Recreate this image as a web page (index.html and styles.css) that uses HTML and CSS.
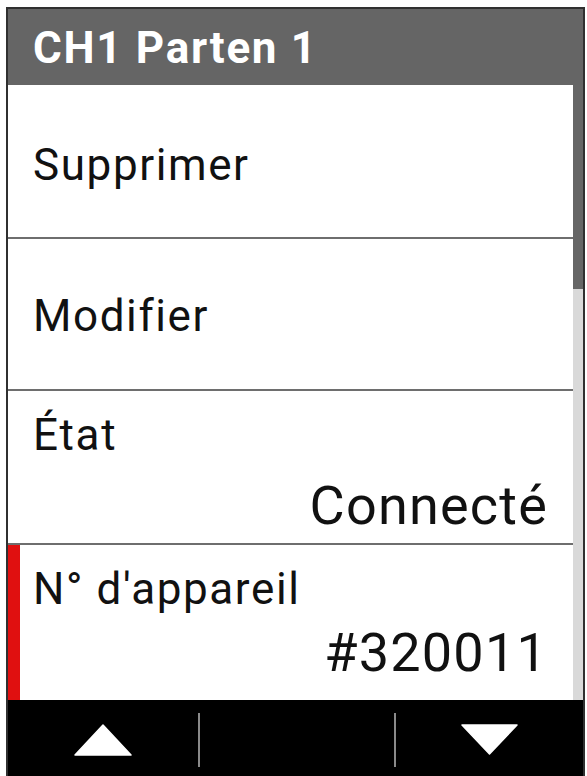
FILE: index.html
```html
<!DOCTYPE html>
<html lang="fr">
<head>
<meta charset="utf-8">
<title>CH1 Parten 1</title>
<link rel="stylesheet" href="styles.css">
</head>
<body>
<div class="device">
  <header class="title-bar"><span class="title">CH1 Parten 1</span></header>
  <div class="content">
    <ul class="menu">
      <li class="row row-single"><span class="label">Supprimer</span></li>
      <li class="row row-single"><span class="label">Modifier</span></li>
      <li class="row row-double row-state">
        <span class="label">État</span>
        <span class="value">Connecté</span>
      </li>
      <li class="row row-double row-device is-selected">
        <span class="label">N° d'appareil</span>
        <span class="value">#320011</span>
      </li>
    </ul>
    <div class="scrollbar"><div class="thumb"></div></div>
  </div>
  <footer class="softkeys">
    <div class="key">
      <svg class="arrow" width="58" height="32" viewBox="0 0 58 32"><polygon points="29,1 57,31 1,31" fill="#fff" stroke="#fff" stroke-width="1.5" stroke-linejoin="round"/></svg>
    </div>
    <span class="sep"></span>
    <div class="key"></div>
    <span class="sep"></span>
    <div class="key">
      <svg class="arrow" width="57" height="31" viewBox="0 0 57 31"><polygon points="1,1 56,1 28.5,30" fill="#fff" stroke="#fff" stroke-width="1.5" stroke-linejoin="round"/></svg>
    </div>
  </footer>
</div>
</body>
</html>
```

FILE: styles.css
```css
html, body {
  margin: 0;
  padding: 0;
  background: #ffffff;
}

body {
  font-family: Roboto, "Liberation Sans", Arial, sans-serif;
  color: #111111;
}

.device {
  box-sizing: border-box;
  width: 579px;
  height: 769px;
  margin: 7px 0 0 6px;
  border: 2px solid #303030;
  border-bottom: none;
  display: flex;
  flex-direction: column;
  overflow: hidden;
}

.title-bar {
  height: 76px;
  flex: none;
  background: #656565;
  display: flex;
  align-items: center;
  padding-left: 25px;
  padding-top: 2px;
  box-sizing: border-box;
}

.title {
  color: #ffffff;
  font-weight: 700;
  font-size: 44px;
  line-height: 50px;
  letter-spacing: 1.7px;
}

.content {
  height: 615px;
  flex: none;
  display: flex;
}

.menu {
  list-style: none;
  margin: 0;
  padding: 0;
  flex: 1;
  display: flex;
  flex-direction: column;
}

.row {
  box-sizing: border-box;
  border-bottom: 2px solid #6e6e6e;
  padding: 0 25px;
  font-size: 44px;
  line-height: 52px;
  letter-spacing: 1.6px;
}

.row:last-child {
  border-bottom: none;
}

.row-single {
  display: flex;
  align-items: center;
}

.row-single:nth-child(1) {
  height: 154px;
  padding-top: 8px;
}

.row-single:nth-child(2) {
  height: 152px;
  padding-top: 4px;
}

.row-double {
  display: flex;
  flex-direction: column;
}

.row-state {
  height: 154px;
  padding-top: 18px;
}

.row-state .value {
  margin-top: 15px;
}

.row-device {
  height: 155px;
  padding-top: 18px;
}

.row-device .value {
  margin-top: 8px;
}

.value {
  align-self: flex-end;
  font-size: 54px;
  line-height: 60px;
  letter-spacing: 1.2px;
}

.is-selected {
  box-shadow: inset 12px 0 0 #e01010;
}

.scrollbar {
  width: 10px;
  flex: none;
  background: #d9d9d9;
  display: flex;
  flex-direction: column;
}

.thumb {
  height: 204px;
  background: #666666;
}

.softkeys {
  height: 76px;
  flex: none;
  background: #000000;
  display: flex;
}

.key {
  display: flex;
  align-items: center;
  justify-content: center;
  padding-top: 3px;
  box-sizing: border-box;
}

.key:nth-child(1) {
  width: 190px;
}

.key:nth-child(3) {
  width: 194px;
}

.key:nth-child(5) {
  flex: 1;
}

.sep {
  width: 2px;
  height: 54px;
  margin-top: 13px;
  background: #8a8a8a;
  flex: none;
}
```
